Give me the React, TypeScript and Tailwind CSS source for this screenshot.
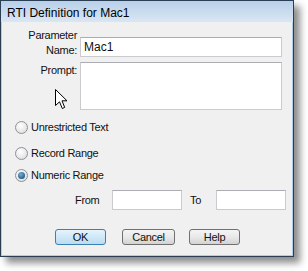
const font = { fontFamily: '"Liberation Sans", Arial, sans-serif' }

function Radio({ checked, label }: { checked?: boolean; label: string }) {
  return (
    <div className="flex items-center h-[13px] pl-[13px]">
      <span className="w-[13px] h-[13px] rounded-full border border-[#8f9193] bg-[radial-gradient(circle_at_40%_35%,#ffffff,#d6d7d9)] flex items-center justify-center">
        {checked && (
          <span className="w-[7px] h-[7px] rounded-full bg-[radial-gradient(circle_at_40%_35%,#6fb2de,#0e3d63)]" />
        )}
      </span>
      <span className="ml-[3px] leading-[13px]">{label}</span>
    </div>
  )
}

function Field({ className }: { className: string }) {
  return <div className={`bg-white border border-[#c9cbcf] border-t-[#abadb3] ${className}`} />
}

function Btn({ label, primary, className }: { label: string; primary?: boolean; className: string }) {
  return (
    <div
      className={`h-[16px] rounded-[3px] border flex items-center justify-center leading-[13px] ${
        primary
          ? 'border-[#3c7fb1] bg-gradient-to-b from-[#e6f4fc] to-[#b9dcf2]'
          : 'border-[#707070] bg-gradient-to-b from-[#f4f4f4] via-[#e9e9e9] to-[#d2d2d2]'
      } ${className}`}
    >
      {label}
    </div>
  )
}

export default function App() {
  return (
    <div className="w-[308px] h-[271px] bg-white text-[11px] text-[#111] tracking-[-0.3px]" style={font}>
      <div className="w-[294px] h-[257px] border border-[#2b3d52] flex flex-col shadow-[6px_6px_7px_rgba(0,0,0,0.45)]">
        {/* Title bar */}
        <div className="h-[21px] pl-[6px] pt-[5px] bg-gradient-to-b from-[#b8d0ea] to-[#dae6f3] text-[12px] leading-[15px] tracking-normal text-[#000]">
          RTI Definition for Mac1
        </div>

        {/* Body */}
        <div className="relative flex-1 bg-[#f0f0f0] border border-t-0 border-[#b3cce6] pt-[7px]">
          <div className="flex items-start">
            <div className="w-[75px] text-right leading-[13px]">
              <div>Parameter</div>
              <div className="mt-[2px]">Name:</div>
            </div>
            <div className="ml-[3px] mt-[8px] h-[20px] w-[202px] bg-white border border-[#c9cbcf] border-t-[#abadb3] flex items-center pl-[3px] text-[12px] tracking-normal">
              Mac1
            </div>
          </div>

          <div className="flex items-start mt-[5px]">
            <div className="w-[75px] text-right leading-[13px] pt-[2px]">Prompt:</div>
            <Field className="ml-[3px] h-[48px] w-[202px]" />
          </div>

          <div className="mt-[11px]"><Radio label="Unrestricted Text" /></div>
          <div className="mt-[13px]"><Radio label="Record Range" /></div>
          <div className="mt-[9px]"><Radio checked label="Numeric Range" /></div>

          <div className="flex items-center mt-[8px] pl-[73px]">
            <span className="w-[37px]">From</span>
            <Field className="w-[70px] h-[20px]" />
            <span className="w-[34px] pl-[8px]">To</span>
            <Field className="w-[70px] h-[20px]" />
          </div>

          <div className="flex mt-[19px] pl-[53px]">
            <Btn primary label="OK" className="w-[51px]" />
            <Btn label="Cancel" className="ml-[16px] w-[53px]" />
            <Btn label="Help" className="ml-[14px] w-[51px]" />
          </div>

          {/* mouse pointer */}
          <svg className="absolute left-[53px] top-[67px]" width="13" height="21" viewBox="0 0 13 21">
            <path d="M0.5 0.5 L0.5 16.5 L4.5 12.8 L7.3 19.5 L9.7 18.4 L7 11.8 L12 11.8 Z" fill="#fff" stroke="#000" strokeWidth="1" strokeLinejoin="miter" />
          </svg>
        </div>
      </div>
    </div>
  )
}
